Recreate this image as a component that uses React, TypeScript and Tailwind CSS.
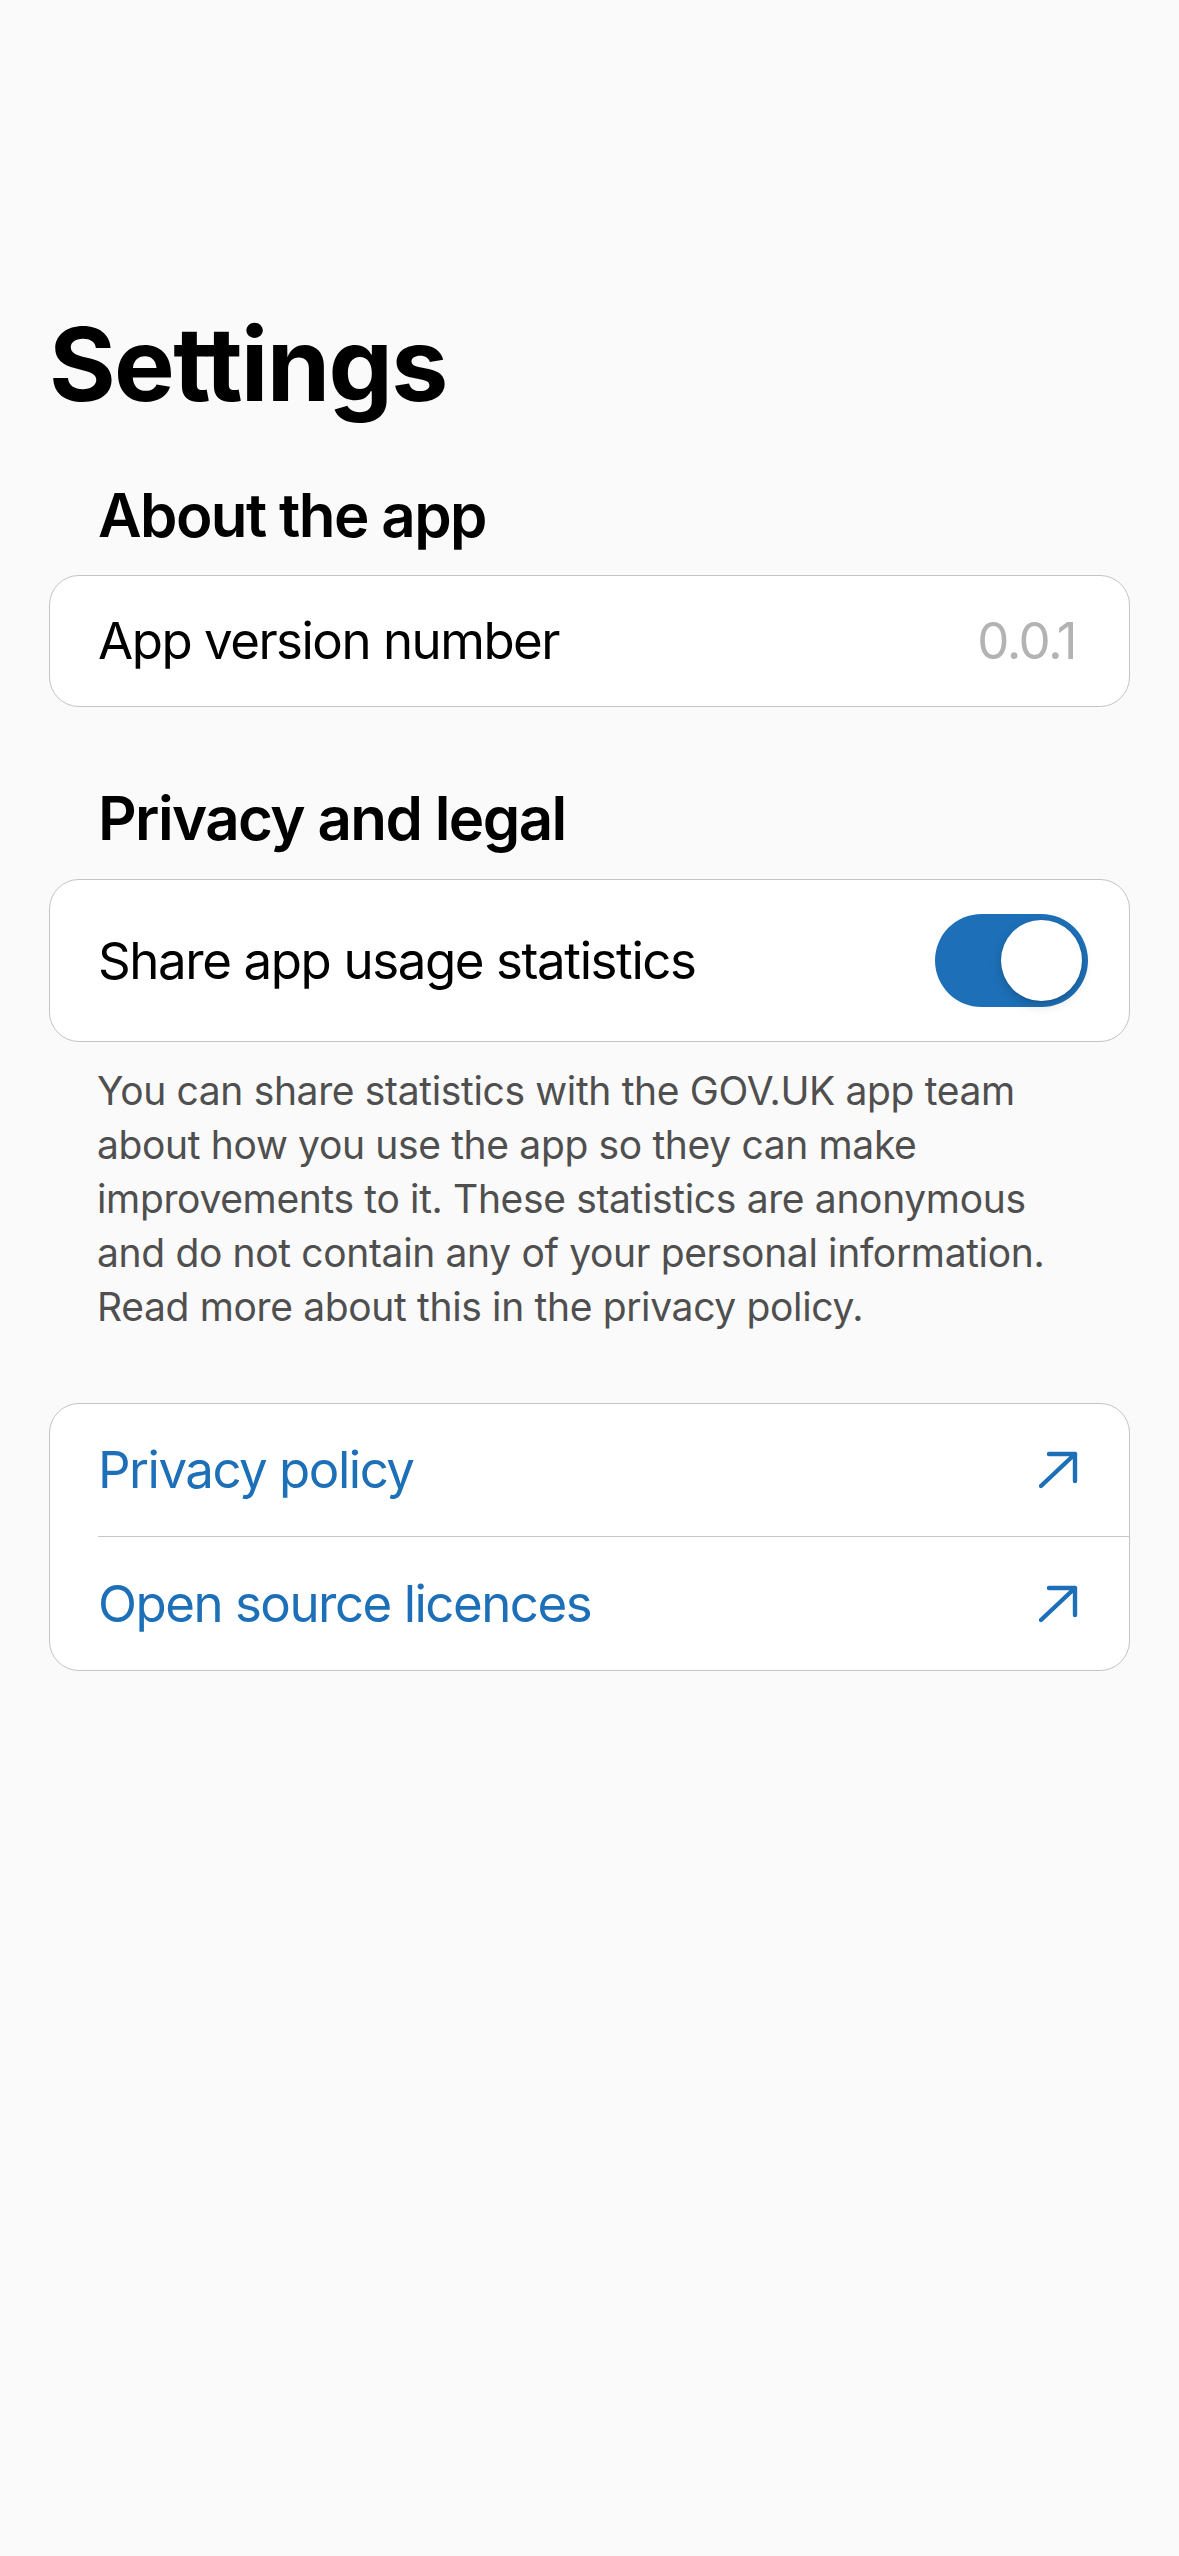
import React from 'react';

const ArrowUpRight: React.FC = () => (
  <svg width="40" height="40" viewBox="0 0 40 40" fill="none" className="shrink-0">
    <path d="M2 36 L36 4 M10 4 H36 V31" stroke="#1d70b8" strokeWidth="4.4" strokeLinecap="round" strokeLinejoin="round" />
  </svg>
);

const Toggle: React.FC<{ on: boolean }> = ({ on }) => (
  <div className={`w-[153px] h-[93px] rounded-full p-[6px] flex shrink-0 ${on ? 'bg-[#1d70b8] justify-end' : 'bg-[#e5e5ea] justify-start'}`}>
    <div className="w-[81px] h-[81px] rounded-full bg-white shadow-[0_4px_12px_rgba(0,0,0,0.18),0_1px_2px_rgba(0,0,0,0.12)]" />
  </div>
);

const App: React.FC = () => {
  const footer = [
    'You can share statistics with the GOV.UK app team',
    'about how you use the app so they can make',
    'improvements to it. These statistics are anonymous',
    'and do not contain any of your personal information.',
    'Read more about this in the privacy policy.',
  ];

  return (
    <div className="min-h-screen bg-[#fafafa] px-[49px] pt-[303px] font-['Inter','Liberation_Sans',sans-serif] text-black">
      <h1 className="text-[102px] leading-[122px] font-bold tracking-[-1.7px]">Settings</h1>

      <h2 className="mt-[54px] pl-[49px] text-[60px] leading-[72px] font-semibold tracking-[-1.6px]">About the app</h2>
      <div className="mt-[24px] h-[132px] bg-white border border-[#c4c4c4] rounded-[30px] pl-[48px] pr-[53px] flex items-center justify-between text-[51px] leading-[62px] tracking-[-1.5px]">
        <span>App version number</span>
        <span className="text-[#b3b3b3]">0.0.1</span>
      </div>

      <h2 className="mt-[75px] pl-[49px] text-[60px] leading-[72px] font-semibold tracking-[-1.6px]">Privacy and legal</h2>
      <div className="mt-[25px] h-[163px] bg-white border border-[#c4c4c4] rounded-[30px] pl-[48px] pr-[41px] flex items-center justify-between">
        <span className="text-[51px] leading-[62px] tracking-[-1.4px]">Share app usage statistics</span>
        <Toggle on />
      </div>

      <p className="mt-[22px] pl-[48px] text-[39px] leading-[54px] tracking-[-0.35px] text-[#4f4f4f]">
        {footer.map((line) => (
          <span key={line} className="block whitespace-nowrap">{line}</span>
        ))}
      </p>

      <div className="mt-[69px] bg-white border border-[#c4c4c4] rounded-[30px] overflow-hidden">
        {['Privacy policy', 'Open source licences'].map((label, i) => (
          <div key={label} className="pl-[48px]">
            <div className={`h-[133px] pr-[50px] flex items-center justify-between ${i === 0 ? 'border-b border-[#c8c8c8]' : ''}`}>
              <span className="text-[51px] leading-[62px] tracking-[-1.5px] text-[#1d70b8]">{label}</span>
              <ArrowUpRight />
            </div>
          </div>
        ))}
      </div>
    </div>
  );
};

export default App;
